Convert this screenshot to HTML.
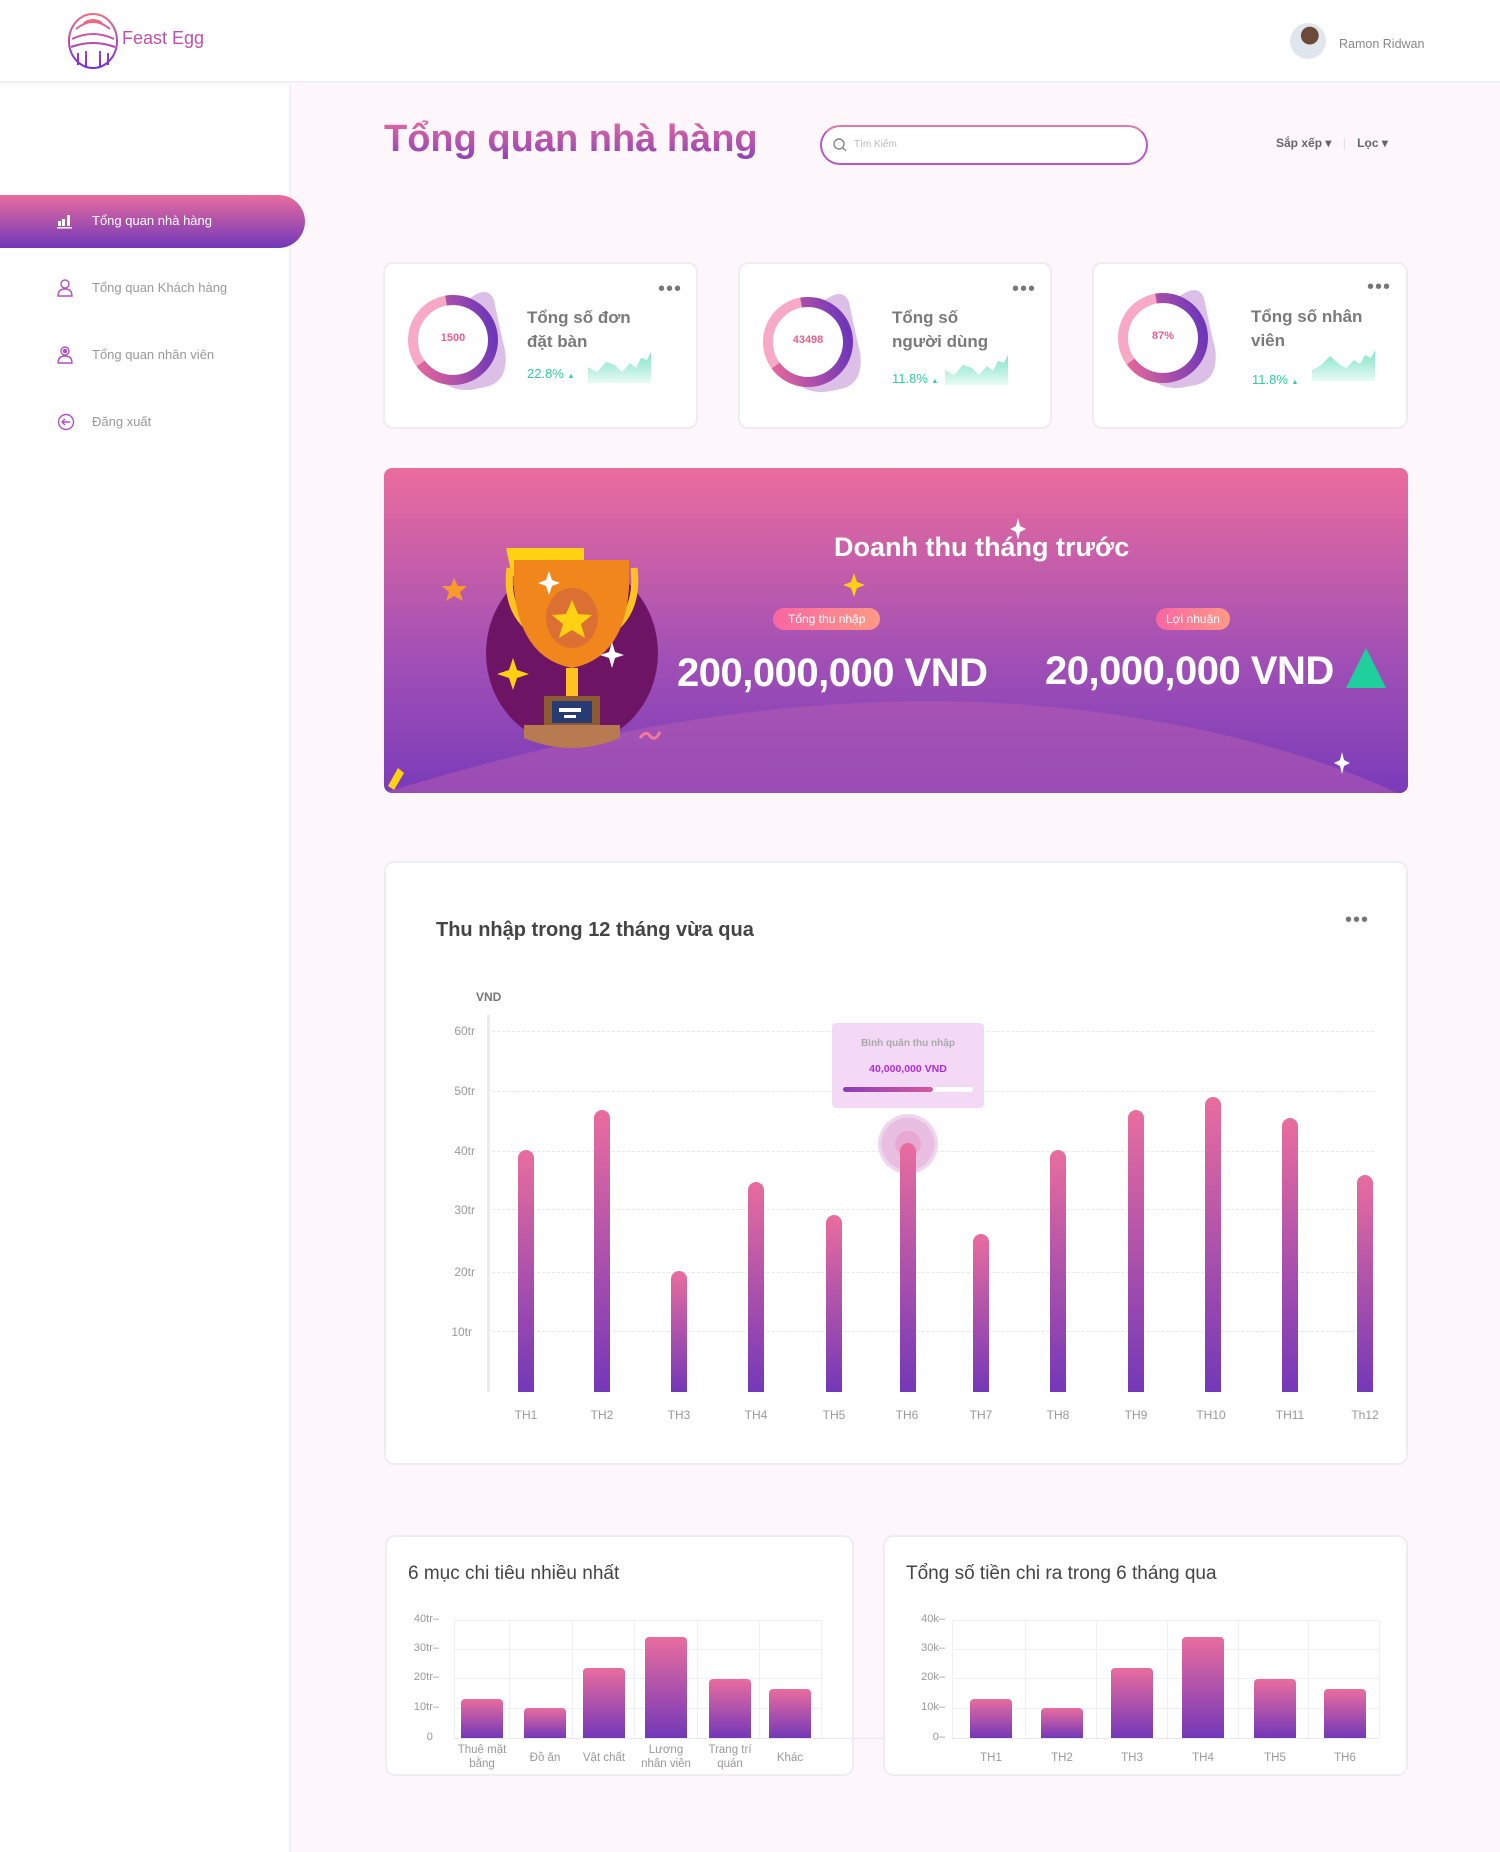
<!DOCTYPE html>
<html><head><meta charset="utf-8"><style>
*{margin:0;padding:0;box-sizing:border-box}
body{width:1500px;height:1852px;background:#fdf7fb;font-family:"Liberation Sans",sans-serif;position:relative;overflow:hidden;color:#555}
.abs{position:absolute}
.header{left:0;top:0;width:1500px;height:83px;background:#fff;border-bottom:2px solid #f3eff2}
.side{left:0;top:85px;width:291px;height:1767px;background:#fff;border-right:2px solid #f1edf0}
.mt{position:absolute;left:92px;font-size:13px;color:#999}
.mi{position:absolute;left:57px}
.card{background:#fff;border:2px solid #f0ecef;border-radius:10px}
.dots{font-size:20px;color:#777;letter-spacing:1px;line-height:10px}
.ct{font-weight:bold;font-size:17px;color:#7a7a7a;line-height:24px}
.pct{color:#2ad0a0;font-size:13px}
.bar{position:absolute;width:16px;border-radius:8px 8px 0 0;background:linear-gradient(#e96d9e,#7338b8)}
.bar2{position:absolute;width:42px;border-radius:4px 4px 0 0;background:linear-gradient(#e96d9e,#7338b8)}
.yl{position:absolute;font-size:12px;color:#999;text-align:right;width:30px}
.xl{position:absolute;font-size:12px;color:#999;text-align:center;width:60px}
.grid{position:absolute;border-top:1px dashed #e8e8ea}
.sl{position:absolute;font-size:11px;color:#999;text-align:right;width:40px}
.sx{position:absolute;font-size:11.5px;color:#999;text-align:center;width:70px;line-height:14px}
.sg{position:absolute;border-top:1px solid #f0f0f4}
.sv{position:absolute;border-left:1px solid #f0f0f4}
</style></head><body>
<div class="abs header"></div>
<svg class="abs" style="left:66px;top:9px" width="54" height="60" viewBox="0 0 54 60">
<defs><linearGradient id="lg" x1="0" y1="0" x2="0" y2="1"><stop offset="0" stop-color="#ef6b80"/><stop offset="1" stop-color="#7a2ee0"/></linearGradient></defs>
<g fill="none" stroke="url(#lg)" stroke-width="2"><ellipse cx="27" cy="32" rx="24" ry="27"/><path d="M10 20 Q27 6 44 20M6 30 Q27 20 48 30M5 38 Q27 30 49 38M12 44 V56M20 42 V58M34 42 V58M42 44 V56M18 14 Q27 8 36 14"/></g></svg>
<div class="abs" style="left:122px;top:28px;font-size:18px;color:#c24fb0">Feast Egg</div>
<div class="abs" style="left:1290px;top:23px;width:36px;height:36px;border-radius:50%;background:radial-gradient(circle at 55% 35%,#6b4a3a 0 28%,#dfe6ee 30%)"></div>
<div class="abs" style="left:1339px;top:37px;font-size:12.5px;color:#888">Ramon Ridwan</div>
<div class="abs side"></div>
<div class="abs" style="left:0;top:195px;width:305px;height:53px;border-radius:0 27px 27px 0;background:linear-gradient(#e96d9e,#7038b8)"></div>
<svg class="mi" style="top:213px" width="16" height="16"><g fill="#fff"><rect x="1" y="8" width="3" height="5"/><rect x="5" y="6" width="3" height="7"/><rect x="10" y="2" width="3" height="11"/><rect x="0" y="14" width="15" height="1.5"/></g></svg>
<div class="mt" style="top:213px;color:#fff">Tổng quan nhà hàng</div>
<svg class="mi" style="top:279px" width="16" height="18"><g fill="none" stroke="#b44fc5" stroke-width="1.4"><circle cx="8" cy="5" r="4"/><path d="M1 17 Q1 10 8 10 Q15 10 15 17 Z"/></g></svg>
<div class="mt" style="top:280px">Tổng quan Khách hàng</div>
<svg class="mi" style="top:346px" width="16" height="18"><g fill="none" stroke="#b44fc5" stroke-width="1.4"><circle cx="8" cy="5" r="4"/><circle cx="8" cy="5" r="1.6" fill="#b44fc5"/><path d="M1 17 Q1 10 8 10 Q15 10 15 17 Z"/></g></svg>
<div class="mt" style="top:347px">Tổng quan nhân viên</div>
<svg class="mi" style="top:413px" width="18" height="18"><g fill="none" stroke="#b44fc5" stroke-width="1.4"><circle cx="9" cy="9" r="7.5"/><path d="M13 9 H5 M8 6 L5 9 L8 12"/></g></svg>
<div class="mt" style="top:414px">Đăng xuất</div>

<div class="abs" style="left:384px;top:118px;font-size:38px;font-weight:bold;background:linear-gradient(#e46ea0,#8c3fb8);-webkit-background-clip:text;color:transparent">Tổng quan nhà hàng</div>
<div class="abs" style="left:820px;top:125px;width:328px;height:40px;border-radius:20px;border:2px solid #b957c8;border-top-color:#e07aa8;background:#fff"></div>
<svg class="abs" style="left:832px;top:137px" width="16" height="16"><g fill="none" stroke="#888" stroke-width="1.4"><circle cx="7" cy="7" r="5"/><path d="M11 11 L14 14"/></g></svg>
<div class="abs" style="left:854px;top:139px;font-size:10px;color:#bbb">Tìm Kiếm</div>
<div class="abs" style="left:1276px;top:136px;font-size:12px;color:#666;font-weight:bold">Sắp xếp ▾ <span style="color:#ddd;font-weight:normal;margin:0 8px">|</span> Lọc ▾</div>

<!-- cards -->
<div class="abs card" style="left:383px;top:262px;width:315px;height:167px"></div>
<div class="abs card" style="left:738px;top:262px;width:314px;height:167px"></div>
<div class="abs card" style="left:1092px;top:262px;width:316px;height:167px"></div>
<svg class="abs" style="left:0;top:0" width="1500" height="460">
<defs><linearGradient id="rg" x1="0" y1="0" x2="0" y2="1"><stop offset="0" stop-color="#e5679b"/><stop offset="1" stop-color="#6f37b8"/></linearGradient>
<linearGradient id="sp" x1="0" y1="0" x2="0" y2="1"><stop offset="0" stop-color="#7ee4c4"/><stop offset="1" stop-color="#e8faf4"/></linearGradient></defs>
<g id="c1">
<path d="M470 298 Q488 285 494 300 Q500 330 505 350 Q510 385 480 388 Q455 395 438 378 L470 300 Z" fill="#d5b4e3" opacity=".85"/>
<circle cx="453" cy="340" r="40" fill="#fff" stroke="#f7a9c5" stroke-width="10"/>
<circle cx="453" cy="340" r="40" fill="none" stroke="url(#rg)" stroke-width="10" stroke-dasharray="170 260" transform="rotate(-100 453 340)"/>
</g>
<use href="#c1" x="355" y="2"/>
<use href="#c1" x="710" y="-2"/>
<path d="M588 383 V367 L597 372 L606 362 L615 365 L622 372 L630 363 L636 368 L641 358 L647 360 L651 352 V383 Z" fill="url(#sp)"/>
<path d="M945 385 V370 L954 375 L963 365 L972 368 L979 375 L987 366 L993 371 L998 361 L1004 363 L1008 355 V385 Z" fill="url(#sp)"/>
<path d="M1312 381 V370 L1321 365 L1330 356 L1339 364 L1346 368 L1354 360 L1360 364 L1365 355 L1371 358 L1375 350 V381 Z" fill="url(#sp)"/>
</svg>
<div class="abs" style="left:433px;top:332px;width:40px;text-align:center;font-size:11px;font-weight:bold;color:#ef5f8c">1500</div>
<div class="abs" style="left:785px;top:334px;width:46px;text-align:center;font-size:11px;font-weight:bold;color:#ef5f8c">43498</div>
<div class="abs" style="left:1143px;top:330px;width:40px;text-align:center;font-size:11px;font-weight:bold;color:#ef5f8c">87%</div>
<div class="abs dots" style="left:658px;top:284px">•••</div>
<div class="abs dots" style="left:1012px;top:284px">•••</div>
<div class="abs dots" style="left:1367px;top:282px">•••</div>
<div class="abs ct" style="left:527px;top:306px">Tổng số đơn<br>đặt bàn</div>
<div class="abs ct" style="left:892px;top:306px">Tổng số<br>người dùng</div>
<div class="abs ct" style="left:1251px;top:305px">Tổng số nhân<br>viên</div>
<div class="abs pct" style="left:527px;top:366px">22.8% <span style="font-size:7px">▲</span></div>
<div class="abs pct" style="left:892px;top:371px">11.8% <span style="font-size:7px">▲</span></div>
<div class="abs pct" style="left:1252px;top:372px">11.8% <span style="font-size:7px">▲</span></div>

<!-- banner -->
<div class="abs" style="left:384px;top:468px;width:1024px;height:325px;border-radius:8px;overflow:hidden;background:linear-gradient(#ea6c9d,#a04fb6 60%,#7a3bb8)">
<svg width="1024" height="325" style="position:absolute;left:0;top:0">
<path d="M0 325 Q400 200 720 245 Q900 270 1024 330 Z" fill="#b55bb2" opacity=".55"/>
<ellipse cx="188" cy="185" rx="86" ry="92" fill="#6e1465"/>
<path d="M128 108 H200 V80 H122 Z" fill="#ffd113"/>
<path d="M126 100 Q120 150 160 170" fill="none" stroke="#ffc220" stroke-width="7"/>
<path d="M250 100 Q256 150 216 170" fill="none" stroke="#ffc220" stroke-width="7"/>
<path d="M130 92 H245 V120 Q240 190 188 200 Q136 190 130 120 Z" fill="#f0861c"/>
<ellipse cx="188" cy="150" rx="26" ry="30" fill="#db7032"/>
<path d="M188 132 l6 14 14 1 -11 9 4 14 -13 -8 -13 8 4 -14 -11 -9 14 -1z" fill="#ffd113"/>
<rect x="182" y="200" width="12" height="28" fill="#ffc220"/>
<rect x="160" y="228" width="56" height="30" fill="#8b5a33"/>
<rect x="168" y="233" width="40" height="22" fill="#263a74"/>
<rect x="175" y="240" width="22" height="4" fill="#fff"/><rect x="180" y="247" width="12" height="3" fill="#fff"/>
<path d="M140 257 H236 V270 Q188 290 140 270 Z" fill="#b87a50"/>
<path d="M70 110 l4 8 9 0 -7 6 3 9 -9 -5 -8 5 3 -9 -7 -6 9 0z" fill="#f89b2b"/>
<path d="M129 190 l4 12 12 4 -12 4 -4 12 -4 -12 -12 -4 12 -4z" fill="#ffd113"/>
<path d="M228 174 l3 10 9 3 -9 3 -3 10 -3 -10 -9 -3 9 -3z" fill="#fff"/>
<path d="M165 103 l3 9 8 3 -8 3 -3 9 -3 -9 -8 -3 8 -3z" fill="#fff"/>
<path d="M470 105 l3 9 8 3 -8 3 -3 9 -3 -9 -8 -3 8 -3z" fill="#ffd113"/>
<path d="M634 50 l2 8 6 3 -6 3 -2 8 -2 -8 -6 -3 6 -3z" fill="#fff"/>
<path d="M958 284 l2 8 6 3 -6 3 -2 8 -2 -8 -6 -3 6 -3z" fill="#fff"/>
<path d="M256 270 q6 -8 10 -2 q5 6 10 -4" fill="none" stroke="#f07a9a" stroke-width="3"/>
<path d="M4 318 L14 300 L20 305 L10 322 Z" fill="#ffd113"/>
<path d="M962 220 L982 180 L1002 220 Z" fill="#1fcf9c"/>
</svg>
<div style="position:absolute;left:450px;top:64px;font-size:27px;font-weight:bold;color:#fff">Doanh thu tháng trước</div>
<div style="position:absolute;left:389px;top:140px;padding:4px 15px;border-radius:14px;background:linear-gradient(90deg,#f866a2,#ff9a85);font-size:12px;color:#fff">Tổng thu nhập</div>
<div style="position:absolute;left:772px;top:140px;padding:4px 10px;border-radius:14px;background:linear-gradient(90deg,#f866a2,#ff9a85);font-size:12px;color:#fff">Lợi nhuận</div>
<div style="position:absolute;left:293px;top:183px;font-size:40px;font-weight:bold;color:#fff;letter-spacing:-0.5px">200,000,000 VND</div>
<div style="position:absolute;left:661px;top:181px;font-size:40px;font-weight:bold;color:#fff;letter-spacing:-0.5px">20,000,000 VND</div>
</div>

<!-- main chart -->
<div class="abs card" style="left:384px;top:861px;width:1024px;height:604px"></div>
<div class="abs" style="left:436px;top:919px;font-size:20px;font-weight:bold;color:#444">Thu nhập trong 12 tháng vừa qua</div>
<div class="abs dots" style="left:1345px;top:915px">•••</div>
<div class="abs" style="left:476px;top:990px;font-size:12px;font-weight:bold;color:#777">VND</div>
<div class="abs" style="left:487px;top:1015px;width:3px;height:377px;background:#e8ebef"></div>
<div class="grid" style="left:492px;top:1031px;width:882px"></div>
<div class="grid" style="left:492px;top:1091px;width:882px"></div>
<div class="grid" style="left:492px;top:1151px;width:882px"></div>
<div class="grid" style="left:492px;top:1209px;width:882px"></div>
<div class="grid" style="left:492px;top:1272px;width:882px"></div>
<div class="grid" style="left:492px;top:1331px;width:882px"></div>
<div class="yl" style="left:445px;top:1024px">60tr</div>
<div class="yl" style="left:445px;top:1084px">50tr</div>
<div class="yl" style="left:445px;top:1144px">40tr</div>
<div class="yl" style="left:445px;top:1203px">30tr</div>
<div class="yl" style="left:445px;top:1265px">20tr</div>
<div class="yl" style="left:442px;top:1325px">10tr</div>
<div class="bar" style="left:518px;top:1150px;height:242px"></div>
<div class="bar" style="left:594px;top:1110px;height:282px"></div>
<div class="bar" style="left:671px;top:1271px;height:121px"></div>
<div class="bar" style="left:748px;top:1182px;height:210px"></div>
<div class="bar" style="left:826px;top:1215px;height:177px"></div>
<div class="abs" style="left:878px;top:1114px;width:60px;height:60px;border-radius:50%;background:radial-gradient(#e7a8d3 0 30%,#e9bfe1 31% 62%,#eed7ec 63%)"></div>
<div class="bar" style="left:900px;top:1143px;height:249px"></div>
<div class="bar" style="left:973px;top:1234px;height:158px"></div>
<div class="bar" style="left:1050px;top:1150px;height:242px"></div>
<div class="bar" style="left:1128px;top:1110px;height:282px"></div>
<div class="bar" style="left:1205px;top:1097px;height:295px"></div>
<div class="bar" style="left:1282px;top:1118px;height:274px"></div>
<div class="bar" style="left:1357px;top:1175px;height:217px"></div>
<div class="abs" style="left:832px;top:1023px;width:152px;height:85px;background:#f3d9f5;border-radius:4px"></div>
<div class="abs" style="left:832px;top:1038px;width:152px;text-align:center;font-size:10px;font-weight:bold;color:#aaa">Bình quân thu nhập</div>
<div class="abs" style="left:832px;top:1063px;width:152px;text-align:center;font-size:10.5px;font-weight:bold;color:#b02ce0">40,000,000 VND</div>
<div class="abs" style="left:843px;top:1087px;width:130px;height:5px;border-radius:3px;background:#fff"></div>
<div class="abs" style="left:843px;top:1087px;width:90px;height:5px;border-radius:3px;background:linear-gradient(90deg,#8d3db8,#d35a9f)"></div>
<div class="xl" style="left:496px;top:1408px">TH1</div>
<div class="xl" style="left:572px;top:1408px">TH2</div>
<div class="xl" style="left:649px;top:1408px">TH3</div>
<div class="xl" style="left:726px;top:1408px">TH4</div>
<div class="xl" style="left:804px;top:1408px">TH5</div>
<div class="xl" style="left:877px;top:1408px">TH6</div>
<div class="xl" style="left:951px;top:1408px">TH7</div>
<div class="xl" style="left:1028px;top:1408px">TH8</div>
<div class="xl" style="left:1106px;top:1408px">TH9</div>
<div class="xl" style="left:1181px;top:1408px">TH10</div>
<div class="xl" style="left:1260px;top:1408px">TH11</div>
<div class="xl" style="left:1335px;top:1408px">Th12</div>

<!-- bottom cards -->
<div class="abs card" style="left:385px;top:1535px;width:469px;height:241px"></div>
<div class="abs card" style="left:883px;top:1535px;width:525px;height:241px"></div>
<div class="abs" style="left:408px;top:1563px;font-size:19px;color:#444">6 mục chi tiêu nhiều nhất</div>
<div class="abs" style="left:906px;top:1563px;font-size:19px;color:#444">Tổng số tiền chi ra trong 6 tháng qua</div>
<!-- left chart -->
<div class="sg" style="left:454px;top:1620px;width:367px"></div>
<div class="sg" style="left:454px;top:1649px;width:367px"></div>
<div class="sg" style="left:454px;top:1678px;width:367px"></div>
<div class="sg" style="left:454px;top:1708px;width:367px"></div>
<div class="sg" style="left:454px;top:1738px;width:430px;border-color:#e8e8ee"></div>
<div class="sv" style="left:454px;top:1620px;height:118px"></div>
<div class="sv" style="left:509px;top:1620px;height:118px"></div>
<div class="sv" style="left:572px;top:1620px;height:118px"></div>
<div class="sv" style="left:634px;top:1620px;height:118px"></div>
<div class="sv" style="left:697px;top:1620px;height:118px"></div>
<div class="sv" style="left:759px;top:1620px;height:118px"></div>
<div class="sv" style="left:821px;top:1620px;height:118px"></div>
<div class="sl" style="left:399px;top:1613px">40tr–</div>
<div class="sl" style="left:399px;top:1642px">30tr–</div>
<div class="sl" style="left:399px;top:1671px">20tr–</div>
<div class="sl" style="left:399px;top:1701px">10tr–</div>
<div class="sl" style="left:399px;top:1731px">0&nbsp;&nbsp;</div>
<div class="bar2" style="left:461px;top:1699px;height:39px"></div>
<div class="bar2" style="left:524px;top:1708px;height:30px"></div>
<div class="bar2" style="left:583px;top:1668px;height:70px"></div>
<div class="bar2" style="left:645px;top:1637px;height:101px"></div>
<div class="bar2" style="left:709px;top:1679px;height:59px"></div>
<div class="bar2" style="left:769px;top:1689px;height:49px"></div>
<div class="sx" style="left:447px;top:1743px">Thuê mặt<br>bằng</div>
<div class="sx" style="left:510px;top:1751px">Đồ ăn</div>
<div class="sx" style="left:569px;top:1751px">Vật chất</div>
<div class="sx" style="left:631px;top:1743px">Lương<br>nhân viên</div>
<div class="sx" style="left:695px;top:1743px">Trang trí<br>quán</div>
<div class="sx" style="left:755px;top:1751px">Khác</div>
<!-- right chart -->
<div class="sg" style="left:952px;top:1620px;width:427px"></div>
<div class="sg" style="left:952px;top:1649px;width:427px"></div>
<div class="sg" style="left:952px;top:1678px;width:427px"></div>
<div class="sg" style="left:952px;top:1708px;width:427px"></div>
<div class="sg" style="left:952px;top:1738px;width:427px;border-color:#e8e8ee"></div>
<div class="sv" style="left:952px;top:1620px;height:118px"></div>
<div class="sv" style="left:1025px;top:1620px;height:118px"></div>
<div class="sv" style="left:1096px;top:1620px;height:118px"></div>
<div class="sv" style="left:1167px;top:1620px;height:118px"></div>
<div class="sv" style="left:1238px;top:1620px;height:118px"></div>
<div class="sv" style="left:1308px;top:1620px;height:118px"></div>
<div class="sv" style="left:1379px;top:1620px;height:118px"></div>
<div class="sl" style="left:905px;top:1613px">40k–</div>
<div class="sl" style="left:905px;top:1642px">30k–</div>
<div class="sl" style="left:905px;top:1671px">20k–</div>
<div class="sl" style="left:905px;top:1701px">10k–</div>
<div class="sl" style="left:905px;top:1731px">0–</div>
<div class="bar2" style="left:970px;top:1699px;height:39px"></div>
<div class="bar2" style="left:1041px;top:1708px;height:30px"></div>
<div class="bar2" style="left:1111px;top:1668px;height:70px"></div>
<div class="bar2" style="left:1182px;top:1637px;height:101px"></div>
<div class="bar2" style="left:1254px;top:1679px;height:59px"></div>
<div class="bar2" style="left:1324px;top:1689px;height:49px"></div>
<div class="sx" style="left:956px;top:1751px">TH1</div>
<div class="sx" style="left:1027px;top:1751px">TH2</div>
<div class="sx" style="left:1097px;top:1751px">TH3</div>
<div class="sx" style="left:1168px;top:1751px">TH4</div>
<div class="sx" style="left:1240px;top:1751px">TH5</div>
<div class="sx" style="left:1310px;top:1751px">TH6</div>
</body></html>
